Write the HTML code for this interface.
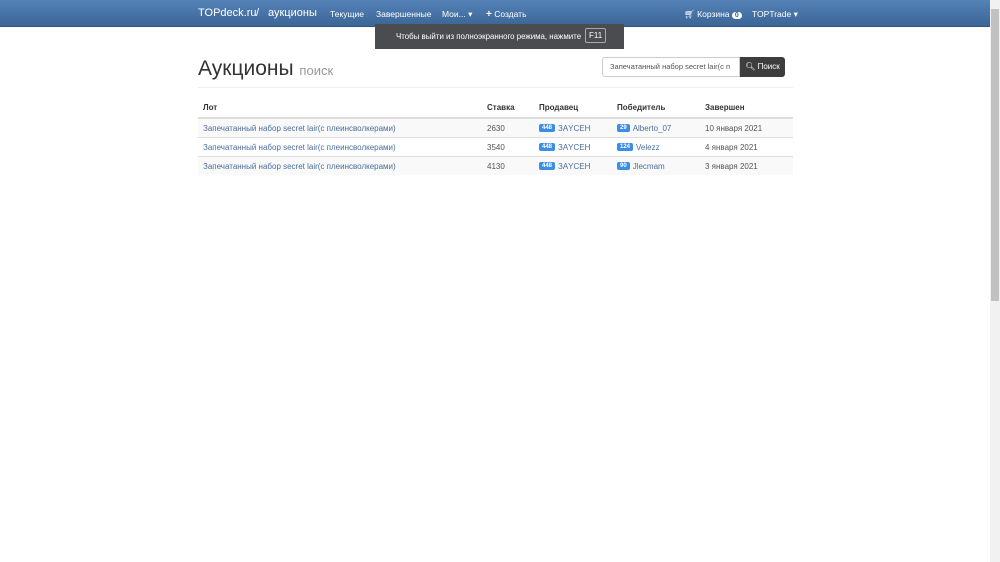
<!DOCTYPE html>
<html><head><meta charset="utf-8"><style>
body{margin:0;width:1000px;height:562px;overflow:hidden;background:#fff;font-family:"Liberation Sans",sans-serif;position:relative}
.nav{position:absolute;left:0;top:0;width:990px;height:26px;background:linear-gradient(#5582b8,#3b6596);border-bottom:1px solid #2f5580}
.nav span{position:absolute;color:#fff;font-size:8.5px;top:9px;white-space:nowrap}
.toast{position:absolute;left:375px;top:24px;width:249px;height:25px;background:#4a4c50;color:#fff;font-size:7.9px}
.sb{position:absolute;left:990px;top:0;width:10px;height:562px;background:#f1f1f1}
.sb div{position:absolute;left:1px;top:9px;width:8px;height:292px;background:#c1c1c1}
h1{position:absolute;left:198px;top:57px;margin:0;font-weight:normal;font-size:21px;color:#333}
h1 small{font-size:13px;color:#999}
.inp{position:absolute;left:602px;top:57px;border:1px solid #ccc;border-radius:3px 0 0 3px;font-size:7.5px;color:#555;line-height:18px;padding-left:7px;box-sizing:border-box;width:138px;height:20px;overflow:hidden;white-space:nowrap}
.btn{position:absolute;left:740px;top:57px;width:45px;height:20px;background:#3d3d3d;border-radius:0 3px 3px 0;color:#fff;font-size:8px;line-height:20px;text-align:center}
.hr{position:absolute;left:198px;top:87px;width:595px;border-top:1px solid #eee}
table{position:absolute;left:198px;top:98px;width:595px;border-collapse:collapse;font-size:8px}
th{text-align:left;color:#333;height:19px;padding:0 5px;border-bottom:2px solid #ddd;font-weight:bold}
td{height:18px;padding:0 5px;border-top:1px solid #ddd;color:#555;vertical-align:middle}
tr.s td{background:#f9f9f9}
a{color:#4a6e9a}
.b{display:inline-block;background:#3a8ee6;color:#fff;font-size:6px;font-weight:bold;padding:1px 3px;border-radius:2px;margin-right:3px;vertical-align:middle}
</style></head><body>
<div class="nav">
<span style="left:198px;top:7px;font-size:11px">TOPdeck.ru</span>
<span style="left:256px;top:7px;font-size:11px">/</span>
<span style="left:268px;top:7px;font-size:11px">аукционы</span>
<span style="left:330px">Текущие</span>
<span style="left:376px">Завершенные</span>
<span style="left:442px">Мои... ▾</span>
<span style="left:486px"><b style="font-size:10px">+</b> Создать</span>
<span style="left:684px">🛒︎ Корзина <b style="background:#fff;color:#3b6596;border-radius:6px;padding:0 3px;font-size:7px">0</b></span>
<span style="left:752px">TOPTrade ▾</span>
</div>
<div class="toast"><span style="position:absolute;left:21px;top:8px;white-space:nowrap">Чтобы выйти из полноэкранного режима, нажмите</span><span style="position:absolute;left:210px;top:4px;border:1px solid #aaa;border-radius:2px;padding:2px 3px;font-size:8px">F11</span></div>
<div class="sb"><div></div></div>
<h1>Аукционы <small>поиск</small></h1>
<div class="inp">Запечатанный набор secret lair(с п</div>
<div class="btn">🔍︎ Поиск</div>
<div class="hr"></div>
<table>
<tr><th style="width:274px">Лот</th><th style="width:42px">Ставка</th><th style="width:68px">Продавец</th><th style="width:78px">Победитель</th><th>Завершен</th></tr>
<tr class="s"><td><a>Запечатанный набор secret lair(с плеинсволкерами)</a></td><td>2630</td><td><span class="b">448</span><a>ЗАYCEH</a></td><td><span class="b">29</span><a>Alberto_07</a></td><td>10 января 2021</td></tr>
<tr><td><a>Запечатанный набор secret lair(с плеинсволкерами)</a></td><td>3540</td><td><span class="b">448</span><a>ЗАYCEH</a></td><td><span class="b">124</span><a>Velezz</a></td><td>4 января 2021</td></tr>
<tr class="s"><td><a>Запечатанный набор secret lair(с плеинсволкерами)</a></td><td>4130</td><td><span class="b">448</span><a>ЗАYCEH</a></td><td><span class="b">90</span><a>Jlecmam</a></td><td>3 января 2021</td></tr>
</table>
</body></html>
